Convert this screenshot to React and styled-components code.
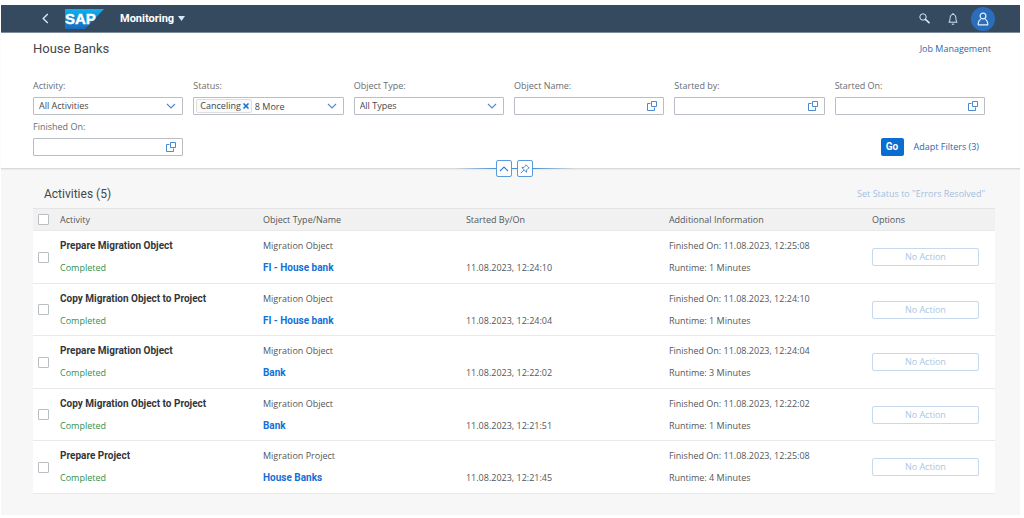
import React from "react";
import styled, { createGlobalStyle, css } from "styled-components";

const GlobalStyle = createGlobalStyle`
  *, *::before, *::after { box-sizing: border-box; }
  body {
    margin: 0;
    background: #fff;
    color: #53575b;
    font: 9px/14px "Open Sans", "Liberation Sans", sans-serif;
  }
  button, input, select { font: inherit; color: inherit; margin: 0; }
  button { padding: 0; border: 0; background: none; cursor: pointer; }
  a { text-decoration: none; }
`;

const strongText = css`
  font-family: Roboto, "Liberation Sans", sans-serif;
  font-size: 10px;
  font-weight: 700;
`;

const headingText = css`
  margin: 0;
  font-family: Roboto, "Liberation Sans", sans-serif;
  line-height: 16px;
  font-weight: 400;
  color: #44484c;
`;

const Page = styled.div`
  display: flex;
  flex-direction: column;
  min-height: 100vh;
  padding: 5px 4px 3px 1px;
`;

const ShellBar = styled.header`
  display: flex;
  align-items: center;
  height: 28px;
  padding: 0 25px 0 38px;
  background: #354a5f;
  border-bottom: 1px solid #7c8b9a;
`;

const ShellButton = styled.button`
  display: flex;
  align-items: center;
  justify-content: center;
  width: 12px;
  height: 14px;
  color: #d1e8ff;
`;

const Logo = styled.svg`
  display: block;
  width: 39px;
  height: 20px;
  margin: 0 16px 0 14px;
`;

const AppMenu = styled.button`
  ${strongText}
  display: flex;
  align-items: center;
  gap: 4px;
  color: #fff;
  font-size: 11px;
`;

const ShellActions = styled.div`
  display: flex;
  align-items: center;
  gap: 17px;
  margin-left: auto;
`;

const Avatar = styled.button`
  display: flex;
  align-items: center;
  justify-content: center;
  width: 24px;
  height: 24px;
  margin-left: -5px;
  border-radius: 50%;
  background: #2a6ebb;
`;

const FilterHeader = styled.section`
  position: relative;
  padding: 8px 35px 12px 32px;
  background: #fff;
  border-bottom: 1px solid #d9d9d9;
  box-shadow: 0 1px 1px #ececec;
`;

const TitleRow = styled.div`
  display: flex;
  align-items: center;
  justify-content: space-between;
  height: 16px;
`;

const Title = styled.h1`
  ${headingText}
  font-size: 13px;
`;

const TextLink = styled.a`
  margin-right: -6px;
  color: #2c68ad;
`;

const FilterForm = styled.form`
  display: grid;
  grid-template-columns: repeat(6, 1fr);
  gap: 5px 10px;
  margin-top: 22px;
`;

const Field = styled.div`
  display: flex;
  flex-direction: column;
  gap: 4px;
  min-width: 0;
`;

const Label = styled.label`
  color: #6a6d70;
`;

const Control = styled.div`
  display: flex;
  align-items: center;
  position: relative;
  height: 18px;
  border: 1px solid #b9bec4;
  border-radius: 1px;
  background: #fff;
  color: #4a8ad0;
`;

const controlText = css`
  flex: 1;
  min-width: 0;
  width: 100%;
  height: 16px;
  border: 0;
  padding: 0 5px;
  outline: 0;
  background: transparent;
  color: #44484c;
`;

const Select = styled.select`
  ${controlText}
  appearance: none;
`;

const TextInput = styled.input`
  ${controlText}
  padding-left: ${(p) => (p.$afterToken ? "3px" : "5px")};
`;

const ControlIcon = styled.span`
  position: absolute;
  right: 6px;
  display: flex;
  pointer-events: none;
`;

const ControlButton = styled.button`
  display: flex;
  margin-right: 6px;
  color: #4a8ad0;
`;

const Token = styled.span`
  display: flex;
  align-items: center;
  gap: 2px;
  height: 14px;
  margin-left: 2px;
  padding: 0 2px 0 3px;
  border: 1px solid #dedede;
  border-radius: 2px;
  background: #fafafa;
  color: #44484c;
`;

const TokenRemove = styled.button`
  display: flex;
  color: #0a6ed1;
`;

const FilterActions = styled.div`
  grid-column: 5 / -1;
  display: flex;
  align-items: flex-end;
  justify-content: flex-end;
  gap: 10px;
`;

const GoButton = styled.button`
  ${strongText}
  width: 23px;
  height: 18px;
  border-radius: 2px;
  background: #0a6ed1;
  color: #fff;
`;

const PlainButton = styled.button`
  height: 18px;
  padding-right: ${(p) => (p.$inset ? "6px" : "0")};
  color: #2c68ad;
  &:disabled { color: #a3bfdd; cursor: default; }
`;

const HeaderToggles = styled.div`
  position: absolute;
  left: 50%;
  bottom: -9px;
  transform: translateX(-50%);
  display: flex;
  align-items: center;
  justify-content: center;
  gap: 5px;
  width: 120px;
  margin-left: 4px;
  background: linear-gradient(90deg, transparent, #4a90d6 35%, #4a90d6 65%, transparent) center / 100% 1px no-repeat;
`;

const ToggleButton = styled.button`
  display: flex;
  align-items: center;
  justify-content: center;
  width: 16px;
  height: 17px;
  border: 1px solid #5b9bdc;
  border-radius: 2px;
  background: #fff;
  color: #3c7fca;
`;

const Content = styled.main`
  flex: 1;
  padding: 16px 25px 21px 32px;
  background: #f7f7f7;
`;

const TableToolbar = styled.div`
  display: flex;
  align-items: center;
  justify-content: space-between;
  height: 18px;
  padding: 0 10px 0 11px;
  margin-bottom: 5px;
`;

const TableTitle = styled.h2`
  ${headingText}
  font-size: 12px;
`;

const Table = styled.table`
  width: 100%;
  table-layout: fixed;
  border-collapse: separate;
  border-spacing: 0;
  text-align: left;
`;

const HeadCell = styled.th`
  width: ${(p) => p.$width || "auto"};
  height: 23px;
  padding: 0;
  background: #f1f1f1;
  border-top: 1px solid #e4e4e4;
  border-bottom: 1px solid #e9e9e9;
  font-weight: 400;
`;

const Row = styled.tr`
  height: 53px;
  background: #fff;
  &:nth-child(even) { height: 52px; }
`;

const Cell = styled.td`
  padding: 0;
  vertical-align: middle;
  border-bottom: 1px solid #e9e9e9;
`;

const Stack = styled.div`
  display: grid;
  grid-template-rows: 14px 14px;
  gap: 8px;
`;

const Name = styled.strong`
  ${strongText}
  color: #32363a;
`;

const StatusText = styled.span`
  color: #2f9150;
`;

const SecondLine = styled.span`
  grid-row: 2;
`;

const ObjectLink = styled.a`
  ${strongText}
  justify-self: start;
  color: #1470d6;
`;

const Checkbox = styled.input.attrs({ type: "checkbox" })`
  display: block;
  appearance: none;
  width: 11px;
  height: 11px;
  margin: 0 0 0 5px;
  border: 1px solid #b9bec4;
  border-radius: 1px;
  background: #fff;
  &:checked { background: #0a6ed1; }
`;

const ActionButton = styled.button`
  display: block;
  width: 107px;
  height: 18px;
  border: 1px solid #c6d9ee;
  border-radius: 2px;
  background: #fff;
  color: #a9c5e3;
`;

const ChevronDown = () => (
  <svg width="10" height="6" viewBox="0 0 10 6" fill="none" stroke="currentColor" strokeWidth="1.1">
    <path d="M1 1l4 4 4-4" />
  </svg>
);

const ValueHelpIcon = () => (
  <svg width="10" height="10" viewBox="0 0 10 10" fill="none" stroke="currentColor" strokeWidth="1">
    <path d="M3.500 2.500H.5v7h7V6.500M4.500.5h5v5h-5z" />
  </svg>
);

const SapLogo = () => (
  <Logo viewBox="0 0 39 20" role="img" aria-label="SAP">
    <defs>
      <linearGradient id="sap-blue" x1="0" y1="0" x2="0" y2="1">
        <stop offset="0" stopColor="#0db1ee" />
        <stop offset="1" stopColor="#1b68bd" />
      </linearGradient>
    </defs>
    <path d="M0 0h39L20 20H0z" fill="url(#sap-blue)" />
    <text x="0" y="15" fill="#fff" stroke="#fff" strokeWidth="0.4" fontFamily="Liberation Sans, sans-serif" fontWeight="700" fontSize="15">SAP</text>
  </Logo>
);

const selects = {
  activity: { label: "Activity:", value: "All Activities" },
  objectType: { label: "Object Type:", value: "All Types" },
};

function SelectField({ id }) {
  const { label, value } = selects[id];
  return (
    <Field>
      <Label htmlFor={id}>{label}</Label>
      <Control>
        <Select id={id} defaultValue={value}>
          <option>{value}</option>
        </Select>
        <ControlIcon><ChevronDown /></ControlIcon>
      </Control>
    </Field>
  );
}

function ValueHelpField({ id, label }) {
  return (
    <Field>
      <Label htmlFor={id}>{label}</Label>
      <Control>
        <TextInput id={id} type="text" />
        <ControlButton type="button" aria-label="Open value help"><ValueHelpIcon /></ControlButton>
      </Control>
    </Field>
  );
}

function StatusField() {
  return (
    <Field>
      <Label htmlFor="status">Status:</Label>
      <Control>
        <Token>
          Canceling
          <TokenRemove type="button" aria-label="Remove">
            <svg width="6" height="6" viewBox="0 0 6 6" stroke="currentColor" strokeWidth="1.5">
              <path d="M.5.5l5 5M5.500.5l-5 5" />
            </svg>
          </TokenRemove>
        </Token>
        <TextInput id="status" type="text" defaultValue="8 More" $afterToken />
        <ControlButton type="button" aria-label="Show statuses"><ChevronDown /></ControlButton>
      </Control>
    </Field>
  );
}

const activities = [
  ["Prepare Migration Object", "Migration Object", "FI - House bank", "12:24:10", "12:25:08", 1],
  ["Copy Migration Object to Project", "Migration Object", "FI - House bank", "12:24:04", "12:24:10", 1],
  ["Prepare Migration Object", "Migration Object", "Bank", "12:22:02", "12:24:04", 3],
  ["Copy Migration Object to Project", "Migration Object", "Bank", "12:21:51", "12:22:02", 1],
  ["Prepare Project", "Migration Project", "House Banks", "12:21:45", "12:25:08", 4],
];

function ActivityRow({ activity }) {
  const [name, type, object, started, finished, minutes] = activity;
  return (
    <Row>
      <Cell><Checkbox aria-label={name} /></Cell>
      <Cell>
        <Stack>
          <Name>{name}</Name>
          <StatusText>Completed</StatusText>
        </Stack>
      </Cell>
      <Cell>
        <Stack>
          <span>{type}</span>
          <ObjectLink href="#object">{object}</ObjectLink>
        </Stack>
      </Cell>
      <Cell>
        <Stack><SecondLine>{`11.08.2023, ${started}`}</SecondLine></Stack>
      </Cell>
      <Cell>
        <Stack>
          <span>{`Finished On: 11.08.2023, ${finished}`}</span>
          <span>{`Runtime: ${minutes} Minutes`}</span>
        </Stack>
      </Cell>
      <Cell><ActionButton disabled>No Action</ActionButton></Cell>
    </Row>
  );
}

export default function App() {
  return (
    <>
      <GlobalStyle />
      <Page>
        <ShellBar>
          <ShellButton aria-label="Back">
            <svg width="7" height="11" viewBox="0 0 7 11" fill="none" stroke="currentColor" strokeWidth="1.4">
              <path d="M5.800 1L1.200 5.500l4.600 4.500" />
            </svg>
          </ShellButton>
          <SapLogo />
          <AppMenu>
            Monitoring
            <svg width="7" height="5" viewBox="0 0 7 5" fill="#d1e8ff"><path d="M0 0h7L3.500 5z" /></svg>
          </AppMenu>
          <ShellActions>
            <ShellButton aria-label="Search">
              <svg width="11" height="11" viewBox="0 0 11 11" fill="none" stroke="currentColor">
                <circle cx="4" cy="4" r="3.200" strokeWidth="1" />
                <path d="M6.400 6.400L10 9.600" strokeWidth="1.700" strokeLinecap="round" />
              </svg>
            </ShellButton>
            <ShellButton aria-label="Notifications">
              <svg width="10" height="12" viewBox="0 0 10 12" fill="none" stroke="currentColor" strokeLinejoin="round">
                <path d="M.8 9.200C2.200 8 2 6 2.200 4.200 2.400 2.400 3.500 1.300 5 1.300S7.600 2.400 7.800 4.200C8 6 7.800 8 9.200 9.200z" />
                <path d="M3.800 11.200h2.400M5 0v1.200" />
              </svg>
            </ShellButton>
            <Avatar aria-label="Profile">
              <svg width="12" height="14" viewBox="0 0 12 14" fill="none" stroke="#e4f1ff" strokeWidth="1.200" strokeLinejoin="round">
                <circle cx="6" cy="4" r="2.900" />
                <path d="M3.800 7.200C2 8 1.200 9.500 1.200 12.800h9.600C10.800 9.500 10 8 8.200 7.200" />
              </svg>
            </Avatar>
          </ShellActions>
        </ShellBar>

        <FilterHeader>
          <TitleRow>
            <Title>House Banks</Title>
            <TextLink href="#jobs">Job Management</TextLink>
          </TitleRow>
          <FilterForm onSubmit={(e) => e.preventDefault()}>
            <SelectField id="activity" />
            <StatusField />
            <SelectField id="objectType" />
            <ValueHelpField id="objectName" label="Object Name:" />
            <ValueHelpField id="startedBy" label="Started by:" />
            <ValueHelpField id="startedOn" label="Started On:" />
            <ValueHelpField id="finishedOn" label="Finished On:" />
            <FilterActions>
              <GoButton type="submit">Go</GoButton>
              <PlainButton type="button" $inset>Adapt Filters (3)</PlainButton>
            </FilterActions>
          </FilterForm>
          <HeaderToggles>
            <ToggleButton aria-label="Collapse header">
              <svg width="10" height="6" viewBox="0 0 10 6" fill="none" stroke="currentColor" strokeWidth="1.100">
                <path d="M1 5l4-4 4 4" />
              </svg>
            </ToggleButton>
            <ToggleButton aria-label="Pin header">
              <svg width="10" height="10" viewBox="0 0 10 10" fill="none" stroke="currentColor" strokeWidth="0.900" strokeLinejoin="round">
                <path d="M6 .8L9.200 4l-1 .3-1.500 1.500-.2 2.400L1.800 3.500l2.400-.2 1.500-1.500zM4.100 5.900L.8 9.200" />
              </svg>
            </ToggleButton>
          </HeaderToggles>
        </FilterHeader>

        <Content>
          <TableToolbar>
            <TableTitle>Activities (5)</TableTitle>
            <PlainButton disabled>Set Status to "Errors Resolved"</PlainButton>
          </TableToolbar>
          <Table>
            <thead>
              <tr>
                <HeadCell $width="27px"><Checkbox aria-label="Select all" /></HeadCell>
                <HeadCell $width="21.1%">Activity</HeadCell>
                <HeadCell $width="21.1%">Object Type/Name</HeadCell>
                <HeadCell $width="21.1%">Started By/On</HeadCell>
                <HeadCell $width="21.1%">Additional Information</HeadCell>
                <HeadCell>Options</HeadCell>
              </tr>
            </thead>
            <tbody>
              {activities.map((activity, i) => <ActivityRow key={i} activity={activity} />)}
            </tbody>
          </Table>
        </Content>
      </Page>
    </>
  );
}
